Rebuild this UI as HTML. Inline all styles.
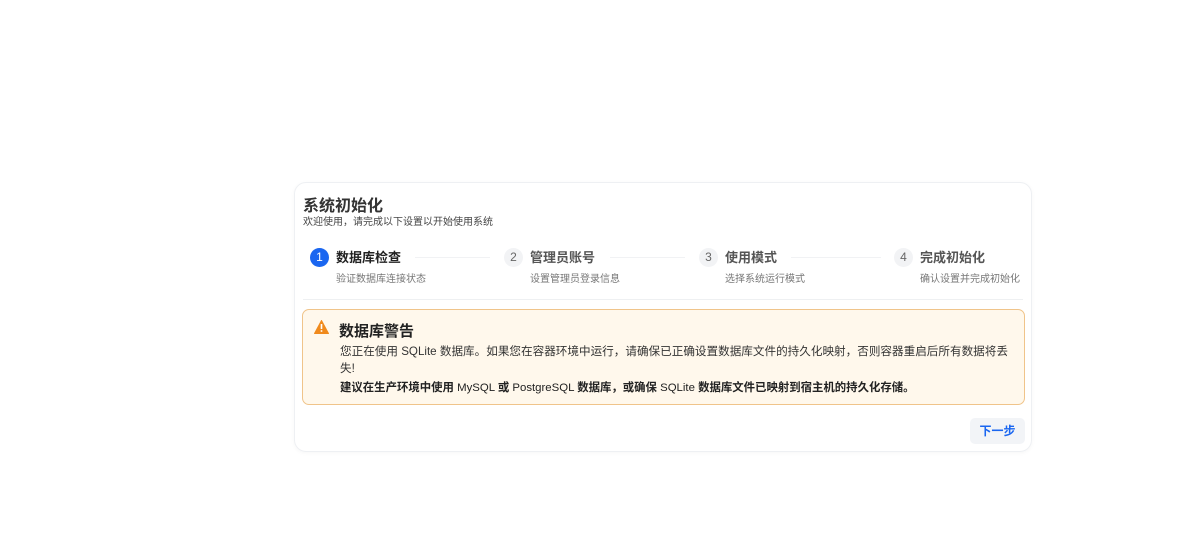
<!DOCTYPE html>
<html><head><meta charset="utf-8"><style>
*{margin:0;padding:0;box-sizing:border-box}
body{width:1200px;height:536px;background:#fff;font-family:"Liberation Sans","Noto Sans CJK SC",sans-serif;position:relative;overflow:hidden;color:#1f2329}
.card{position:absolute;left:294px;top:182px;width:738px;height:270px;border:1px solid #eef0f3;border-radius:12px;box-shadow:0 1px 4px rgba(0,0,0,.04)}
.abs{position:absolute;white-space:nowrap}
.t{left:8px;top:9px;font-size:16px;font-weight:bold;color:#333}
.st{left:8px;top:30px;font-size:10px;color:#444}
.step{position:absolute;top:65px;height:40px}
.c{position:absolute;left:0;top:0;width:19px;height:19px;border-radius:50%;background:#f2f3f5;color:#666;font-size:12px;text-align:center;line-height:19px}
.c.a{background:#1a66f0;color:#fff}
.sn{position:absolute;left:26px;top:0;font-size:13px;font-weight:bold;color:#555;line-height:19px;white-space:nowrap}
.sn.a{color:#222}
.sd{position:absolute;left:26px;top:22px;font-size:10px;color:#777;white-space:nowrap}
.ln{position:absolute;top:9px;height:1px;background:#f1f2f4}
.div{position:absolute;left:8px;right:8px;top:116px;height:1px;background:#eef0f2}
.al{position:absolute;left:7px;top:126px;width:723px;height:96px;background:#fff8ec;border:1px solid #f0c48a;border-radius:7px}
.btn{position:absolute;left:675px;top:235px;width:55px;height:26px;background:#f2f4f7;border-radius:5px;color:#1a66f0;font-size:12px;font-weight:bold;text-align:center;line-height:26px}
</style></head><body>
<div class="card">
<div class="abs t">系统初始化</div>
<div class="abs st">欢迎使用，请完成以下设置以开始使用系统</div>
<div class="step" style="left:15px"><div class="c a">1</div><div class="sn a">数据库检查</div><div class="sd">验证数据库连接状态</div></div>
<div class="ln" style="left:120px;width:75px;top:74px"></div>
<div class="step" style="left:209px"><div class="c">2</div><div class="sn">管理员账号</div><div class="sd">设置管理员登录信息</div></div>
<div class="ln" style="left:315px;width:75px;top:74px"></div>
<div class="step" style="left:404px"><div class="c">3</div><div class="sn">使用模式</div><div class="sd">选择系统运行模式</div></div>
<div class="ln" style="left:496px;width:90px;top:74px"></div>
<div class="step" style="left:599px"><div class="c">4</div><div class="sn">完成初始化</div><div class="sd">确认设置并完成初始化</div></div>
<div class="div"></div>
<div class="al">
<svg style="position:absolute;left:11px;top:10px" width="15" height="14" viewBox="0 0 15 14"><path d="M7.5 0.5 L14.5 13.5 H0.5 Z" fill="#f08a1c" stroke="#f08a1c" stroke-linejoin="round"/><rect x="6.7" y="4" width="1.6" height="5" fill="#fff"/><rect x="6.7" y="10.2" width="1.6" height="1.6" fill="#fff"/></svg>
<div class="abs" style="left:36px;top:10px;font-size:15px;font-weight:bold;color:#222">数据库警告</div>
<div class="abs" style="left:37px;top:33px;font-size:11.6px;color:#333;line-height:17px">您正在使用 SQLite 数据库。如果您在容器环境中运行，请确保已正确设置数据库文件的持久化映射，否则容器重启后所有数据将丢<br>失!</div>
<div class="abs" style="left:37px;top:69px;font-size:11.4px;color:#222"><b>建议在生产环境中使用</b> MySQL <b>或</b> PostgreSQL <b>数据库，或确保</b> SQLite <b>数据库文件已映射到宿主机的持久化存储。</b></div>
</div>
<div class="btn">下一步</div>
</div>
</body></html>
